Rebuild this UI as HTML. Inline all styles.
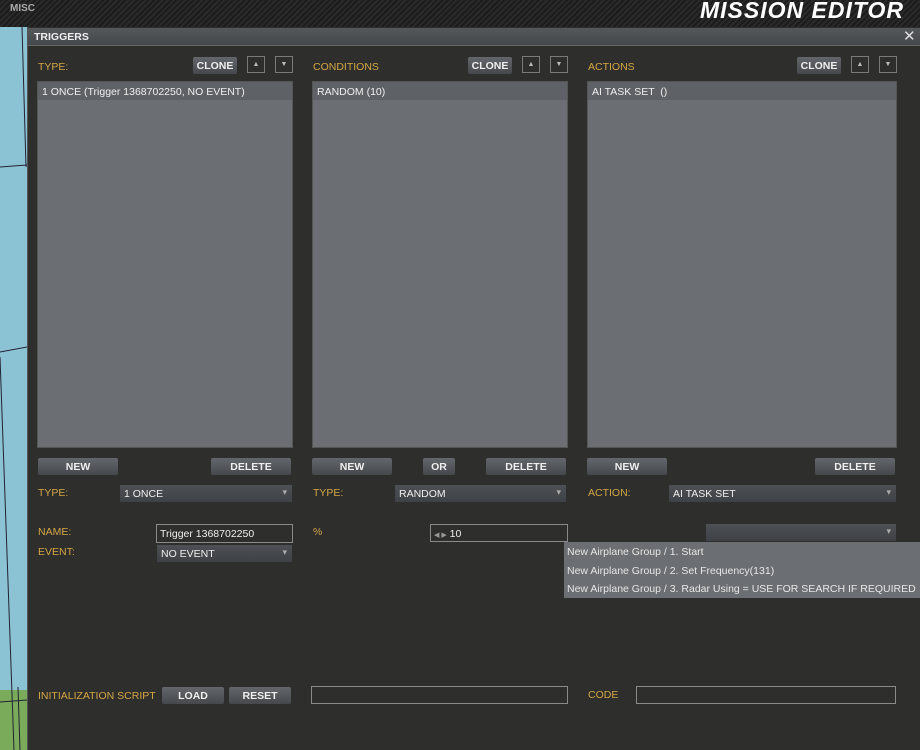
<!DOCTYPE html>
<html><head><style>
*{margin:0;padding:0;box-sizing:border-box}
body{width:920px;height:750px;overflow:hidden;position:relative;background:#2e2e2c;font-family:"Liberation Sans","DejaVu Sans",sans-serif;font-size:10.5px;color:#e6e6e6}
.a{position:absolute;white-space:nowrap}
.top{left:0;top:0;width:920px;height:27px;background:repeating-linear-gradient(135deg,#1c1c1c 0 2px,#2a2a2a 2px 4px)}
.map{left:0;top:27px;width:27px;height:723px;background:#8cc3d4}
.lbl{color:#d5a645;font-size:10.5px}
.list{background:#6b6f73;border:1px solid #555}
.row{height:18px;background:#5e6266;padding:4px 4px 0;color:#eee}
.btn{background:linear-gradient(#63676b,#45484c);border-radius:2px;color:#eee;font-weight:bold;text-align:center;font-size:10.5px;line-height:18px;height:17px}
.arr{width:18px;height:17px;border:1px solid #7a7a7a;color:#bbb;text-align:center;font-size:7px;line-height:15px}
.dd{background:linear-gradient(#4d5155,#3e4145);height:17px;padding:3px 4px 0;color:#eee}
.dd:after{content:"▾";position:absolute;right:5px;top:2px;color:#aaa;font-size:9px}
.inp{border:1px solid #8a8a8a;background:#2e2e2c;padding:3px 3px 0;color:#eee}
</style></head><body>
<div class="a top"></div>
<div class="a" style="left:10px;top:3px;color:#aaa;font-weight:bold;font-size:10px">MISC</div>
<div class="a" style="right:16px;top:-3px;color:#fff;font-weight:bold;font-style:italic;font-size:23px;letter-spacing:1px">MISSION EDITOR</div>
<div class="a map"></div>
<div class="a" style="left:0;top:690px;width:27px;height:60px;background:#7aab5a"></div>
<svg class="a" style="left:0;top:27px" width="27" height="723"><path d="M22 0 L26 140 M0 140 L27 138 M0 325 L27 320 M0 330 L14 723 M0 675 L27 673 M18 660 L20 723" stroke="#223" stroke-width="1" fill="none"/></svg>
<div class="a" style="left:27px;top:27px;width:893px;height:723px;background:#2e2e2c;border-left:1px solid #555"></div>
<div class="a" style="left:28px;top:28px;width:892px;height:18px;background:linear-gradient(#55585b,#45484b);border-bottom:1px solid #666;padding:3px 6px;font-weight:bold;color:#eee">TRIGGERS</div>
<div class="a" style="left:903px;top:27px;color:#ddd;font-size:15px">✕</div>

<div class="a lbl" style="left:38px;top:61px">TYPE:</div>
<div class="a btn" style="left:193px;top:57px;width:44px">CLONE</div>
<div class="a arr" style="left:247px;top:56px">▲</div>
<div class="a arr" style="left:275px;top:56px">▼</div>
<div class="a lbl" style="left:313px;top:61px">CONDITIONS</div>
<div class="a btn" style="left:468px;top:57px;width:44px">CLONE</div>
<div class="a arr" style="left:522px;top:56px">▲</div>
<div class="a arr" style="left:550px;top:56px">▼</div>
<div class="a lbl" style="left:588px;top:61px">ACTIONS</div>
<div class="a btn" style="left:797px;top:57px;width:44px">CLONE</div>
<div class="a arr" style="left:851px;top:56px">▲</div>
<div class="a arr" style="left:879px;top:56px">▼</div>

<div class="a list" style="left:37px;top:81px;width:256px;height:367px"><div class="row">1 ONCE (Trigger 1368702250, NO EVENT)</div></div>
<div class="a list" style="left:312px;top:81px;width:256px;height:367px"><div class="row">RANDOM (10)</div></div>
<div class="a list" style="left:587px;top:81px;width:310px;height:367px"><div class="row">AI TASK SET &nbsp;()</div></div>

<div class="a btn" style="left:38px;top:458px;width:80px">NEW</div>
<div class="a btn" style="left:211px;top:458px;width:80px">DELETE</div>
<div class="a btn" style="left:312px;top:458px;width:80px">NEW</div>
<div class="a btn" style="left:423px;top:458px;width:32px">OR</div>
<div class="a btn" style="left:486px;top:458px;width:80px">DELETE</div>
<div class="a btn" style="left:587px;top:458px;width:80px">NEW</div>
<div class="a btn" style="left:815px;top:458px;width:80px">DELETE</div>

<div class="a lbl" style="left:38px;top:487px">TYPE:</div>
<div class="a dd" style="left:120px;top:485px;width:172px">1 ONCE</div>
<div class="a lbl" style="left:313px;top:487px">TYPE:</div>
<div class="a dd" style="left:395px;top:485px;width:171px">RANDOM</div>
<div class="a lbl" style="left:588px;top:487px">ACTION:</div>
<div class="a dd" style="left:669px;top:485px;width:227px">AI TASK SET</div>

<div class="a lbl" style="left:38px;top:526px">NAME:</div>
<div class="a inp" style="left:156px;top:524px;width:137px;height:19px">Trigger 1368702250</div>
<div class="a lbl" style="left:38px;top:546px">EVENT:</div>
<div class="a dd" style="left:157px;top:545px;width:135px">NO EVENT</div>
<div class="a lbl" style="left:313px;top:526px">%</div>
<div class="a inp" style="left:430px;top:524px;width:138px;height:18px"><span style="color:#999;font-size:7px">◀ ▶</span> 10</div>
<div class="a dd" style="left:706px;top:524px;width:190px"></div>
<div class="a" style="left:564px;top:542px;width:356px;height:56px;background:#6b6f73;color:#e6e6e6;line-height:18.5px;padding:1px 3px 0;overflow:hidden">New Airplane Group / 1. Start<br>New Airplane Group / 2. Set Frequency(131)<br>New Airplane Group / 3. Radar Using = USE FOR SEARCH IF REQUIRED</div>

<div class="a lbl" style="left:38px;top:690px">INITIALIZATION SCRIPT</div>
<div class="a btn" style="left:162px;top:687px;width:62px">LOAD</div>
<div class="a btn" style="left:229px;top:687px;width:62px">RESET</div>
<div class="a inp" style="left:311px;top:686px;width:257px;height:18px"></div>
<div class="a lbl" style="left:588px;top:689px">CODE</div>
<div class="a inp" style="left:636px;top:686px;width:260px;height:18px"></div>
</body></html>
